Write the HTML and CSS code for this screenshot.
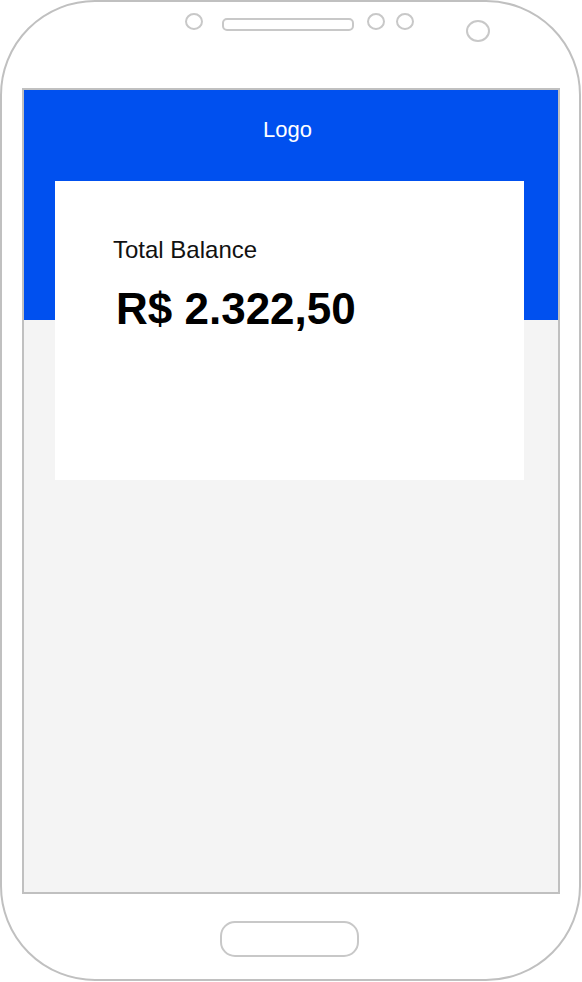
FILE: index.html
```html
<!DOCTYPE html>
<html lang="en">
<head>
<meta charset="utf-8">
<title>Wallet</title>
<link rel="stylesheet" href="styles.css">
</head>
<body>
<div class="phone">
  <div class="sensors">
    <span class="dot"></span>
    <span class="speaker"></span>
    <span class="dot dot-b"></span>
    <span class="dot dot-c"></span>
    <span class="camera"></span>
  </div>
  <div class="screen">
    <header class="header">Logo</header>
    <section class="card">
      <div class="label">Total Balance</div>
      <div class="amount">R$ 2.322,50</div>
    </section>
  </div>
  <div class="home"></div>
</div>
</body>
</html>
```

FILE: styles.css
```css
html, body {
  margin: 0;
  padding: 0;
  background: #ffffff;
}

body {
  font-family: "Liberation Sans", Arial, sans-serif;
}

.phone {
  width: 581px;
  height: 981px;
  box-sizing: border-box;
  border: 2px solid #c0c0c0;
  border-radius: 95px / 95px;
  display: flex;
  flex-direction: column;
}

.sensors {
  height: 86px;
  display: flex;
  align-items: flex-start;
  padding-left: 183px;
  box-sizing: border-box;
}

.dot {
  width: 18px;
  height: 17px;
  box-sizing: border-box;
  border: 2px solid #c8c8c8;
  border-radius: 50%;
  margin-top: 11px;
}

.speaker {
  width: 132px;
  height: 13px;
  box-sizing: border-box;
  border: 2px solid #c8c8c8;
  border-radius: 5px;
  margin-top: 16px;
  margin-left: 19px;
}

.dot-b {
  margin-left: 13px;
}

.dot-c {
  margin-left: 11px;
}

.camera {
  width: 24px;
  height: 22px;
  box-sizing: border-box;
  border: 2px solid #c8c8c8;
  border-radius: 50%;
  margin-top: 18px;
  margin-left: 52px;
}

.screen {
  margin-left: 20px;
  width: 538px;
  height: 806px;
  box-sizing: border-box;
  border: 2px solid #c0c0c0;
  background: #f4f4f4;
  display: flex;
  flex-direction: column;
}

.header {
  height: 230px;
  box-sizing: border-box;
  background: #0050ef;
  color: #ffffff;
  font-size: 22px;
  line-height: 25px;
  text-align: center;
  padding-top: 27px;
  padding-right: 7px;
  flex-shrink: 0;
}

.card {
  margin-top: -139px;
  margin-left: 31px;
  width: 469px;
  height: 299px;
  box-sizing: border-box;
  background: #ffffff;
  padding: 55px 0 0 58px;
}

.label {
  font-size: 24px;
  line-height: 27px;
  color: #111111;
}

.amount {
  margin-top: 21px;
  font-size: 44px;
  line-height: 50px;
  font-weight: bold;
  color: #000000;
  padding-left: 3px;
}

.home {
  margin-top: 27px;
  margin-left: 218px;
  width: 139px;
  height: 36px;
  box-sizing: border-box;
  border: 2px solid #c8c8c8;
  border-radius: 15px;
}
```
